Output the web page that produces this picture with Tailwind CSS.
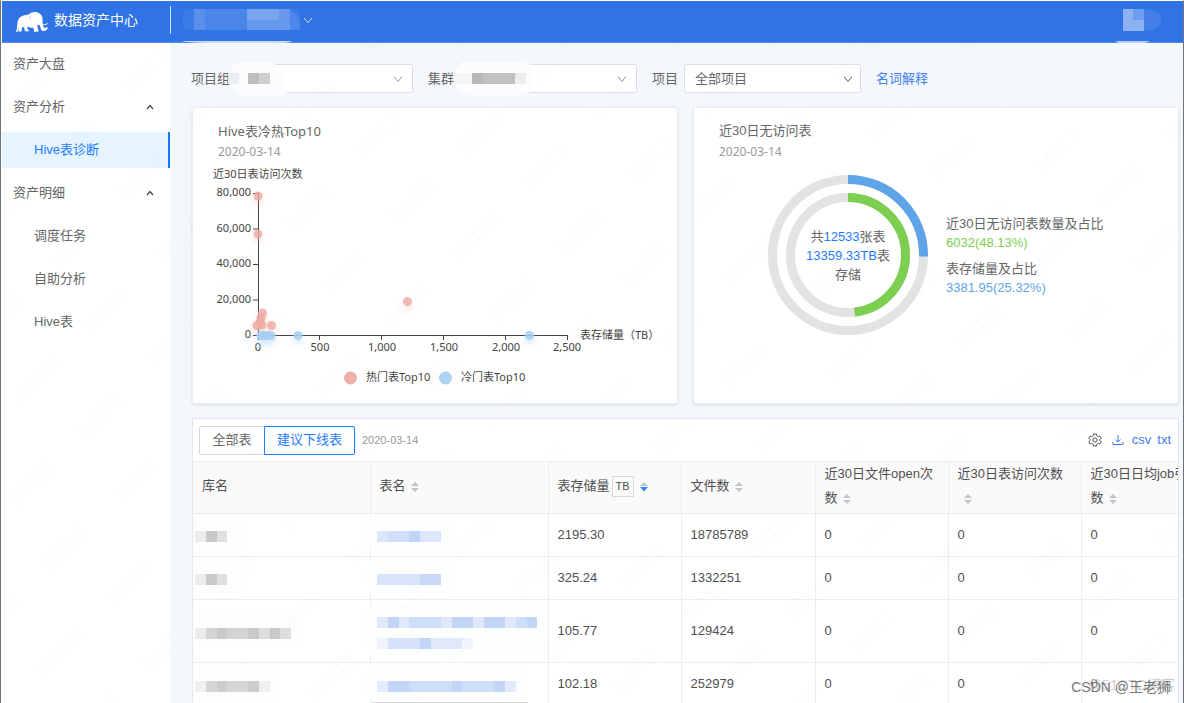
<!DOCTYPE html>
<html lang="zh-CN">
<head>
<meta charset="utf-8">
<title>数据资产中心</title>
<script src="https://cdn.jsdelivr.net/npm/@tailwindcss/browser@4"></script>
</head>
<body class="bg-white font-['Liberation_Sans','Noto_Sans_CJK_SC',sans-serif] text-[13px] text-[#666]">
<div class="relative flex h-screen flex-col overflow-hidden border-x border-t border-l-[#6f7378] border-r-[#6f7378] border-t-white pl-px">

  <header class="flex h-[42px] shrink-0 items-center border-b border-[#4f8df0] bg-[#2f73e5] pl-[14px] pr-5 text-white">
    <svg class="h-[22px] w-8 shrink-0" viewBox="50 26 100 66" fill="#fff" aria-hidden="true">
      <path d="M50 90C53 83 53 76 54 66C55 46 66 38 82 37C88 37 90 35 92 34C96 29 106 26 117 29C128 32 133 40 133 50C133 60 133 70 137 76C140 80 143 79 144 75L149 76C149 84 140 90 132 86C128 84 126 78 125 70L117 67L118 80L122 88L107 90L104 76C98 78 92 77 87 73L85 79L92 88H78L75 75L69 76L67 89H57L59 76L54 90Z"/>
      <path d="M128 66Q138 71 149 64" fill="none" stroke="#fff" stroke-width="3"/>
      <path d="M94 40Q93 48 98 53" fill="none" stroke="#2f73e5" stroke-width="1"/>
    </svg>
    <h1 class="ml-1.5 w-[116px] pb-1 text-sm">数据资产中心</h1>
    <span class="mb-1 h-7 w-px bg-white/80"></span>
    <svg class="ml-3 h-[34px] w-[118px] shrink-0 overflow-visible" viewBox="0 0 118 34" aria-hidden="true">
      <path d="M-2 36H109Q104 39 74 40Q45 41 35 38Q8 38 -2 36" fill="#c9dbf8"/>
      <rect y="4" width="117" height="21" rx="6" fill="#3b7be7"/>
      <path d="M11 4H22V25H11Z" fill="#5a90eb"/><path d="M22 4H33V25H22ZM33 4H64V25H33Z" fill="#4a85e9"/>
      <path d="M64 4H96V15H64Z" fill="#79a5ef"/><path d="M64 15H96V25H64ZM96 4H107V25H96Z" fill="#6598ec"/><path d="M107 6Q118 8 117 25H107Z" fill="#4d87e9"/>
    </svg>
    <button type="button" aria-label="展开" class="mb-1 ml-0.5"><svg class="h-2.5 w-2.5" viewBox="0 0 10 10" fill="none" stroke="#d8e5fb"><path d="M1 3L5 7.500L9 3"/></svg></button>
    <svg class="ml-auto h-[34px] w-12 shrink-0 overflow-visible" viewBox="0 0 48 34" aria-hidden="true">
      <path d="M8 4H29V26H8Z" fill="#8bb1f3"/><path d="M18 4H29V15H18Z" fill="#6e9eef"/><path d="M29 4Q48 6 46 16Q44 26 29 26Z" fill="#4580e8"/><path d="M0 36H35L30 38H4Z" fill="#b9d1f8"/>
    </svg>
  </header>

  <div class="flex min-h-0 flex-1">
    <nav class="flex w-[168px] shrink-0 flex-col gap-[7px] bg-white pt-[3px]">
      <a href="#" class="flex h-9 items-center pl-[11px]">资产大盘</a>
      <button type="button" class="flex h-9 items-center justify-between pl-[11px] pr-4">资产分析
        <svg class="h-2 w-2" viewBox="0 0 8 8" fill="none" stroke="#444" stroke-width="1.2"><path d="M1 6L4 2.500L7 6"/></svg></button>
      <a href="#" class="flex h-9 items-center border-r-2 border-[#1677ff] bg-[#e6f4ff] pl-8 text-[#1f7bff]">Hive表诊断</a>
      <button type="button" class="flex h-9 items-center justify-between pl-[11px] pr-4">资产明细
        <svg class="h-2 w-2" viewBox="0 0 8 8" fill="none" stroke="#444" stroke-width="1.2"><path d="M1 6L4 2.500L7 6"/></svg></button>
      <a href="#" class="flex h-9 items-center pl-8">调度任务</a>
      <a href="#" class="flex h-9 items-center pl-8">自助分析</a>
      <a href="#" class="flex h-9 items-center pl-8">Hive表</a>
    </nav>

    <main class="flex min-w-0 flex-1 flex-col bg-[#f4f8fc] pl-[22px] pr-1 pt-[21px]">
      <form class="-ml-px mb-[14px] flex items-center gap-[15px]">
        <div class="flex items-center gap-1.5">
          <label for="group">项目组</label>
          <div class="relative w-[177px]">
            <select id="group" class="h-[29px] w-full appearance-none rounded-xs border border-[#dcdfe3] bg-white px-2.5"><option></option></select>
            <svg class="pointer-events-none absolute right-2.5 top-2.5 h-2.5 w-2.5" viewBox="0 0 10 10" fill="none" stroke="#999"><path d="M1 2.500L5 7.500L9 2.500"/></svg>
            <svg class="pointer-events-none absolute -left-2 -top-0.5 h-[34px] w-[62px]" viewBox="0 0 62 34" aria-hidden="true"><path d="M10 0H46Q50 8 56 16Q60 28 58 33H10Q0 24 0 16Q0 6 10 0" fill="#fafcfd"/><path d="M0 11H11V22H0Z" fill="#e9edf4"/><path d="M20 11H31V22H20Z" fill="#bfbfc0"/><path d="M31 11H42V22H31Z" fill="#cfcfd0"/></svg>
          </div>
        </div>
        <div class="flex items-center gap-1.5">
          <label for="cluster">集群</label>
          <div class="relative w-[177px]">
            <select id="cluster" class="h-[29px] w-full appearance-none rounded-xs border border-[#dcdfe3] bg-white px-2.5"><option></option></select>
            <svg class="pointer-events-none absolute right-2.5 top-2.5 h-2.5 w-2.5" viewBox="0 0 10 10" fill="none" stroke="#999"><path d="M1 2.500L5 7.500L9 2.500"/></svg>
            <svg class="pointer-events-none absolute -left-1 -top-0.5 h-[34px] w-[80px]" viewBox="0 0 80 34" aria-hidden="true"><rect width="76" height="33" rx="9" fill="#fafcfd"/><path d="M0 11H16V22H0Z" fill="#f4f5f7"/><path d="M16 11H59V22H16Z" fill="#c1c1c2"/><path d="M16 11H27V22H16Z" fill="#b8b8b9"/><path d="M59 11H70V22H59Z" fill="#ececed"/></svg>
          </div>
        </div>
        <div class="flex items-center gap-1.5">
          <label for="project">项目</label>
          <div class="relative w-[177px]">
            <select id="project" class="h-[29px] w-full appearance-none rounded-xs border border-[#dcdfe3] bg-white px-2.5"><option>全部项目</option></select>
            <svg class="pointer-events-none absolute right-2 top-2.5 h-2.5 w-2.5" viewBox="0 0 10 10" fill="none" stroke="#666"><path d="M1 2.500L5 7.500L9 2.500"/></svg>
          </div>
        </div>
        <a href="#" class="text-[#3f7eec]">名词解释</a>
      </form>

      <div class="mb-[14px] grid grid-cols-2 gap-[15px]">
        <section class="h-[297px] rounded-xs border border-[#eceff2] bg-white pt-3 font-['Noto_Sans','Noto_Sans_CJK_SC',sans-serif] shadow-sm">
          <h2 class="pl-[25px] leading-[22px]">Hive表冷热Top10</h2>
          <p class="pl-[25px] text-xs leading-5 text-[#999]">2020-03-14</p>
          <svg class="block h-[230px] w-[484px] text-[11px]" viewBox="193 162 484 230" fill="#444" role="img" aria-label="Hive表冷热散点图">
            <defs>
              <filter id="glow" x="-100%" y="-100%" width="300%" height="300%"><feDropShadow dx="0" dy="4" stdDeviation="3" flood-color="#f2aca5" flood-opacity="0.4"/></filter>
              <filter id="cool" x="-100%" y="-100%" width="300%" height="300%"><feDropShadow dx="0" dy="4" stdDeviation="3" flood-color="#9cc8f5" flood-opacity="0.5"/></filter>
            </defs>
            <text x="213" y="178">近30日表访问次数</text>
            <g text-anchor="end"><text x="251" y="196">80,000</text><text x="251" y="232">60,000</text><text x="251" y="267">40,000</text><text x="251" y="303">20,000</text><text x="251" y="338">0</text></g>
            <path d="M258.500 193V340M253 193.500H258M253 229H258M253 264.500H258M253 300H258M253 335.500H568M319.500 336V340M381.500 336V340M443.500 336V340M505.500 336V340M567.500 336V340" fill="none" stroke="#444"/>
            <g text-anchor="middle"><text x="258" y="351">0</text><text x="320" y="351">500</text><text x="382" y="351">1,000</text><text x="444" y="351">1,500</text><text x="506" y="351">2,000</text><text x="567" y="351">2,500</text></g>
            <text x="580" y="339">表存储量（TB）</text>
            <g fill="#eda9a3" fill-opacity=".8" filter="url(#glow)"><circle cx="258" cy="196" r="4.500"/><circle cx="258" cy="234" r="4.500"/><circle cx="407.500" cy="301.500" r="4.500"/><circle cx="271.500" cy="325.500" r="4.500"/><circle cx="262.500" cy="313" r="4.500"/><circle cx="261" cy="318" r="4.500"/><circle cx="260" cy="322" r="4.500"/><circle cx="257" cy="325.500" r="4.500"/><circle cx="262" cy="325" r="4.500"/></g>
            <g fill="#a7cff5" fill-opacity=".85" filter="url(#cool)"><circle cx="261" cy="335.500" r="4.500"/><circle cx="264" cy="335.500" r="4.500"/><circle cx="267" cy="335.500" r="4.500"/><circle cx="271" cy="335.500" r="4.500"/><circle cx="298" cy="335.500" r="4.500"/><circle cx="529.500" cy="335.500" r="4.500"/></g>
            <circle cx="350.500" cy="378" r="6.500" fill="#f0b0aa"/><text x="366" y="381">热门表Top10</text>
            <circle cx="445.500" cy="378" r="6.500" fill="#afd2f6"/><text x="461" y="381">冷门表Top10</text>
          </svg>
        </section>

        <section class="h-[297px] rounded-xs border border-[#eceff2] bg-white pt-3 shadow-sm">
          <h2 class="pl-[25px] leading-[22px]">近30日无访问表</h2>
          <p class="pl-[25px] font-['Noto_Sans',sans-serif] text-xs leading-5 text-[#999]">2020-03-14</p>
          <div class="mt-[13px] flex items-center gap-[18px] pl-[74px]">
            <div class="relative h-40 w-40 shrink-0">
              <svg class="h-full w-full -rotate-90" viewBox="0 0 160 160" fill="none" stroke-width="9" aria-hidden="true">
                <circle cx="80" cy="80" r="75.500" stroke="#e3e3e3"/><circle cx="80" cy="80" r="57.500" stroke="#e3e3e3"/>
                <circle cx="80" cy="80" r="75.500" stroke="#60a4e8" pathLength="100" stroke-dasharray="25.320 100"/>
                <circle cx="80" cy="80" r="57.500" stroke="#7ccf50" pathLength="100" stroke-dasharray="48.130 100"/>
              </svg>
              <p class="absolute inset-0 flex flex-col items-center justify-center text-center leading-[19px]"><span>共<b class="font-normal text-[#1f7bff]">12533</b>张表</span><span><b class="font-normal text-[#1f7bff]">13359.33TB</b>表</span><span>存储</span></p>
            </div>
            <dl class="leading-[19px]">
              <dt>近30日无访问表数量及占比</dt><dd class="mb-[7px] text-[#7ccf50]">6032(48.13%)</dd>
              <dt>表存储量及占比</dt><dd class="text-[#60a4e8]">3381.95(25.32%)</dd>
            </dl>
          </div>
        </section>
      </div>

      <section class="min-h-0 flex-1 overflow-hidden border-x border-t border-[#e4e8ee] bg-white">
        <div class="flex h-[42px] items-center pl-1.5 pr-[7px]">
          <button type="button" class="h-[29px] w-[66px] rounded-l-xs border border-[#d9d9d9]">全部表</button>
          <button type="button" class="-ml-px h-[29px] w-[91px] rounded-r-xs border border-[#1f7bff] text-[#1f7bff]">建议下线表</button>
          <span class="ml-[7px] text-[11px] text-[#999]">2020-03-14</span>
          <div class="ml-auto flex items-center text-[#3f7eec]">
            <button type="button" aria-label="设置" class="mr-2.5"><svg class="block h-3.5 w-3.5" viewBox="0 0 14 14" fill="none" stroke="#555"><path d="M5.700 1H8.300L8.800 2.700L10.200 3.500L11.900 3.100L13.200 5.300L12 6.500V7.500L13.200 8.700L11.900 10.900L10.200 10.500L8.800 11.300L8.300 13H5.700L5.200 11.300L3.800 10.500L2.100 10.900L.8 8.700L2 7.500V6.500L.8 5.300L2.100 3.100L3.800 3.500L5.200 2.700Z" stroke-linejoin="round"/><circle cx="7" cy="7" r="2.200"/></svg></button>
            <svg class="mr-2 h-3 w-3" viewBox="0 0 12 12" fill="none" stroke="#3f7eec" aria-hidden="true"><path d="M6 1V8M3.500 5.500L6 8L8.500 5.500M1 8V10.500H11V8"/></svg>
            <a href="#" class="mr-1.5">csv</a><a href="#">txt</a>
          </div>
        </div>
        <table class="w-[1027px] table-fixed border-collapse text-left text-[#505050]">
          <colgroup><col class="w-[177px]"><col class="w-[178px]"><col class="w-[133px]"><col class="w-[134px]"><col class="w-[133px]"><col class="w-[133px]"><col class="w-[139px]"></colgroup>
          <thead class="bg-[#fafafa]">
            <tr class="h-[52px] border-y border-[#e9edf6] *:border-r *:border-[#e9edf6] *:pb-[3px] *:pl-[9px] *:pt-0 *:font-normal *:leading-6">
              <th>库名</th>
              <th>表名 <svg class="ml-0.5 inline h-3 w-2" viewBox="0 0 8 12" fill="#c0c4cc"><path d="M0 5L4 1L8 5ZM0 7L4 11L8 7Z"/></svg></th>
              <th>表存储量<button type="button" class="mx-0.5 mr-1.5 h-[21px] w-[22px] border border-[#d9d9d9] text-[11px] leading-none">TB</button><svg class="inline h-3 w-2" viewBox="0 0 8 12" fill="#c0c4cc"><path d="M0 5L4 1L8 5Z"/><path d="M0 6L4 10.500L8 6Z" fill="#2f8bff"/></svg></th>
              <th>文件数 <svg class="ml-0.5 inline h-3 w-2" viewBox="0 0 8 12" fill="#c0c4cc"><path d="M0 5L4 1L8 5ZM0 7L4 11L8 7Z"/></svg></th>
              <th>近30日文件open次<br>数 <svg class="ml-0.5 inline h-3 w-2" viewBox="0 0 8 12" fill="#c0c4cc"><path d="M0 5L4 1L8 5ZM0 7L4 11L8 7Z"/></svg></th>
              <th>近30日表访问次数<br><svg class="ml-1.5 inline h-3 w-2" viewBox="0 0 8 12" fill="#c0c4cc"><path d="M0 5L4 1L8 5ZM0 7L4 11L8 7Z"/></svg></th>
              <th>近30日日均job引用<br>数 <svg class="ml-0.5 inline h-3 w-2" viewBox="0 0 8 12" fill="#c0c4cc"><path d="M0 5L4 1L8 5ZM0 7L4 11L8 7Z"/></svg></th>
            </tr>
          </thead>
          <tbody>
            <tr class="h-[43px] border-b border-[#e9edf6] *:border-r *:border-[#e9edf6] *:pl-[9px]">
              <td><svg class="-ml-[7px] mt-0.5 block h-[11px] w-8 overflow-visible" viewBox="0 0 32 11"><rect x="-4" y="-15" width="56" height="34" rx="8" fill="#fdfefe"/><path d="M0 0H11V11H0Z" fill="#ececec"/><path d="M11 0H22V11H11Z" fill="#c9c9c9"/><path d="M22 0H32V11H22Z" fill="#e0e0e0"/></svg></td>
              <td><svg class="-ml-[3px] mt-0.5 block h-[11px] w-16 overflow-visible" viewBox="0 0 64 11"><rect x="-11" y="-15" width="85" height="34" rx="8" fill="#fdfefe"/><path d="M0 0H64V11H0Z" fill="#dce7fb"/><path d="M11 0H32V11H11Z" fill="#d2dff8"/><path d="M32 0H43V11H32Z" fill="#c1d4f7"/></svg></td>
              <td>2195.30</td><td>18785789</td><td>0</td><td>0</td><td>0</td>
            </tr>
            <tr class="h-[43px] border-b border-[#e9edf6] *:border-r *:border-[#e9edf6] *:pl-[9px]">
              <td><svg class="-ml-[7px] mt-0.5 block h-[11px] w-8 overflow-visible" viewBox="0 0 32 11"><rect x="-4" y="-15" width="56" height="34" rx="8" fill="#fdfefe"/><path d="M0 0H11V11H0Z" fill="#ececec"/><path d="M11 0H22V11H11Z" fill="#c9c9c9"/><path d="M22 0H32V11H22Z" fill="#e0e0e0"/></svg></td>
              <td><svg class="-ml-[3px] mt-0.5 block h-[11px] w-16 overflow-visible" viewBox="0 0 64 11"><rect x="-11" y="-15" width="85" height="34" rx="8" fill="#fdfefe"/><path d="M0 0H43V11H0Z" fill="#d7e4fa"/><path d="M43 0H64V11H43Z" fill="#c8d9f8"/></svg></td>
              <td>325.24</td><td>1332251</td><td>0</td><td>0</td><td>0</td>
            </tr>
            <tr class="h-[63px] border-b border-[#e9edf6] *:border-r *:border-[#e9edf6] *:pl-[9px]">
              <td><svg class="-ml-[7px] mt-1 block h-[11px] w-24 overflow-visible" viewBox="0 0 96 11"><rect x="-4" y="-18" width="110" height="38" rx="8" fill="#fdfefe"/><path d="M0 0H11V11H0Z" fill="#ececec"/><path d="M11 0H85V11H11Z" fill="#d4d4d4"/><path d="M22 0H32V11H22ZM53 0H64V11H53ZM75 0H85V11H75Z" fill="#c9c9c9"/><path d="M64 0H75V11H64ZM85 0H96V11H85Z" fill="#dedede"/></svg></td>
              <td><svg class="-ml-[3px] mt-1 block h-8 w-40 overflow-visible" viewBox="0 0 160 32"><rect x="-11" y="-12" width="180" height="50" rx="8" fill="#fdfefe"/><path d="M0 0H160V11H0Z" fill="#cfdef8"/><path d="M0 0H11V11H0ZM22 0H32V11H22ZM64 0H75V11H64ZM96 0H107V11H96ZM128 0H139V11H128Z" fill="#dfe9fb"/><path d="M11 0H22V11H11ZM75 0H96V11H75ZM107 0H128V11H107ZM150 0H160V11H150Z" fill="#c3d5f7"/><path d="M0 21H11V32H0ZM85 21H96V32H85Z" fill="#eff4fd"/><path d="M11 21H64V32H11Z" fill="#d5e2fa"/><path d="M43 21H54V32H43Z" fill="#c3d5f7"/><path d="M54 21H85V32H54Z" fill="#e0e9fb"/></svg></td>
              <td>105.77</td><td>129424</td><td>0</td><td>0</td><td>0</td>
            </tr>
            <tr class="h-[43px] border-b border-[#e9edf6] *:border-r *:border-[#e9edf6] *:pl-[9px]">
              <td><svg class="-ml-[7px] mt-1 block h-[11px] w-[75px] overflow-visible" viewBox="0 0 75 11"><rect x="-4" y="-15" width="90" height="34" rx="8" fill="#fdfefe"/><path d="M0 0H11V11H0ZM64 0H75V11H64Z" fill="#f0f0f0"/><path d="M11 0H64V11H11Z" fill="#d6d6d6"/><path d="M22 0H32V11H22ZM53 0H64V11H53Z" fill="#cdcdcd"/></svg></td>
              <td><svg class="-ml-[3px] mt-1 block h-[11px] w-[139px] overflow-visible" viewBox="0 0 139 11"><rect x="-11" y="-15" width="160" height="34" rx="8" fill="#fdfefe"/><path d="M0 0H139V11H0Z" fill="#e3ecfc"/><path d="M11 0H128V11H11Z" fill="#cfdef8"/><path d="M11 0H32V11H11ZM75 0H85V11H75ZM117 0H128V11H117Z" fill="#c3d5f7"/><path d="M-5 21H151V22H-5Z" fill="#d5d5d5"/></svg></td>
              <td>102.18</td><td>252979</td><td>0</td><td>0</td><td>0</td>
            </tr>
          </tbody>
        </table>
      </section>
    </main>
  </div>

  <svg class="pointer-events-none absolute inset-0 h-full w-full" aria-hidden="true">
    <defs>
      <pattern id="mark" width="98" height="140" patternUnits="userSpaceOnUse" patternTransform="translate(240 350) rotate(-45)">
        <text class="font-['Liberation_Serif',serif] text-[22px]" x="4" y="22" fill="#000" fill-opacity=".012">34112</text>
        <text class="font-['Liberation_Serif',serif] text-[22px]" x="24" y="92" fill="#000" fill-opacity=".012">34112</text>
      </pattern>
    </defs>
    <rect y="42" width="100%" height="100%" fill="url(#mark)"/>
  </svg>
  <span class="pointer-events-none absolute bottom-2 right-2 text-sm text-[#cfcfcf]">@51CTO博客</span>
  <span class="pointer-events-none absolute bottom-1.5 right-3 text-sm text-[#777]">CSDN @王老狮</span>
</div>
</body>
</html>
